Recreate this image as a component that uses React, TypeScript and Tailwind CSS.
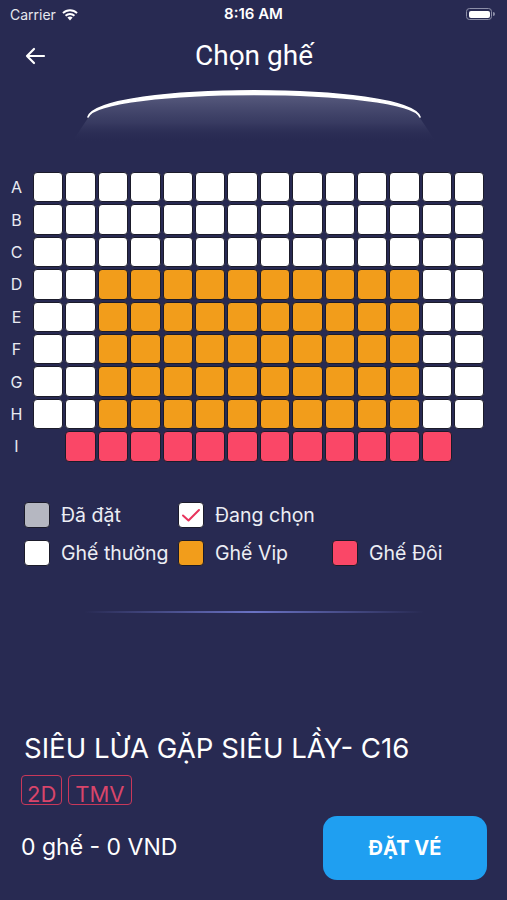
import React from "react";

const ROWS = ["A", "B", "C", "D", "E", "F", "G", "H", "I"];

type Kind = "normal" | "vip" | "couple" | "empty";

function seatKind(r: number, c: number): Kind {
  if (r === 8) return c >= 1 && c <= 12 ? "couple" : "empty";
  if (r >= 3 && c >= 2 && c <= 11) return "vip";
  return "normal";
}

const SEAT_CLS: Record<Kind, string> = {
  normal: "bg-white border border-[#1b1b2a]",
  vip: "bg-[#f29d1b] border border-[#1b1b2a]",
  couple: "bg-[#fa4767] border border-[#1b1b2a]",
  empty: "",
};

function StatusBar() {
  return (
    <div className="relative flex h-[28px] items-center px-[10px] text-white font-['Inter',sans-serif]">
      <div className="flex items-center gap-[5px] text-[14px] text-[#e6e7ee]">
        Carrier
        <svg width="18" height="13" viewBox="0 0 18 13">
          <path d="M9 12.5 L6.4 9.6 A3.8 3.8 0 0 1 11.6 9.6 Z" fill="#fff" />
          <path d="M3.9 7.1 A7.3 7.3 0 0 1 14.1 7.1 L12.8 8.5 A5.4 5.4 0 0 0 5.2 8.5 Z" fill="#fff" />
          <path d="M1.3 4.4 A11 11 0 0 1 16.7 4.4 L15.4 5.8 A9.1 9.1 0 0 0 2.6 5.8 Z" fill="#fff" />
        </svg>
      </div>
      <div className="absolute left-0 right-0 top-0 flex h-[28px] items-center justify-center text-[15px] font-semibold">
        8:16 AM
      </div>
      <div className="ml-auto mr-[2px] flex items-center">
        <div className="flex h-[12px] w-[26px] items-center rounded-[3.5px] border border-[#8d8fa8] p-[1.5px]">
          <div className="h-full w-full rounded-[2px] bg-white" />
        </div>
        <div className="ml-[1px] h-[4px] w-[2px] rounded-r-sm bg-[#8d8fa8]" />
      </div>
    </div>
  );
}

function Screen() {
  return (
    <svg width="507" height="62" viewBox="0 80 507 62" className="block">
      <defs>
        <linearGradient id="glow" x1="0" y1="0" x2="0" y2="1">
          <stop offset="0" stopColor="#5a5d80" stopOpacity="0.95" />
          <stop offset="0.6" stopColor="#3e4167" stopOpacity="0.7" />
          <stop offset="1" stopColor="#282a52" stopOpacity="0" />
        </linearGradient>
      </defs>
      <path
        d="M88 114 C 100 83, 408 83, 420 114 L 436 138 L 72 138 Z"
        fill="url(#glow)"
      />
      <path
        d="M88 113 C 100 78, 408 78, 420 113 C 408 83, 100 83, 88 113 Z"
        fill="#fff"
        stroke="#fff"
        strokeWidth="1.6"
        strokeLinejoin="round"
      />
    </svg>
  );
}

function Legend({ box, label, w }: { box: React.ReactNode; label: string; w: string }) {
  return (
    <div className={`flex items-center gap-[11px] ${w}`}>
      {box}
      <span className="whitespace-nowrap text-[19.5px] leading-[26px] text-[#eceef4]">{label}</span>
    </div>
  );
}

export default function App() {
  return (
    <div className="h-[900px] w-[507px] overflow-hidden bg-[#282a52] font-['Inter',sans-serif] text-white">
      <StatusBar />

      <div className="relative flex h-[56px] items-center justify-center">
        <svg className="absolute left-[24px] top-[19px]" width="22" height="18" viewBox="0 0 22 18">
          <path d="M20 9 H3 M10 2 L3 9 L10 16" fill="none" stroke="#fff" strokeWidth="2.2" strokeLinecap="round" strokeLinejoin="round" />
        </svg>
        <h1 className="pl-[1px] font-['Roboto',sans-serif] text-[28px] text-white">Chọn ghế</h1>
      </div>

      <Screen />

      <div className="mt-[26px] flex flex-col gap-[2px]">
        {ROWS.map((row, r) => (
          <div key={row} className="flex items-center">
            <div className="w-[33px] text-center text-[16px] text-[#e9eaf1]">{row}</div>
            <div className="grid grid-cols-[repeat(14,30.4px)] gap-[2px]">
              {Array.from({ length: 14 }).map((_, c) => {
                const k = seatKind(r, c);
                return (
                  <div
                    key={c}
                    className={`h-[30.4px] w-[30.4px] rounded-[4px] ${SEAT_CLS[k]}`}
                  />
                );
              })}
            </div>
          </div>
        ))}
      </div>

      <div className="ml-[24px] mt-[40px] flex flex-col gap-[12px]">
        <div className="flex items-center">
          <Legend
            w="w-[154px]"
            label="Đã đặt"
            box={<div className="h-[26px] w-[26px] rounded-[4px] border border-[#1b1b2a] bg-[#b5b7c1]" />}
          />
          <Legend
            w="w-[154px]"
            label="Đang chọn"
            box={
              <div className="flex h-[26px] w-[26px] items-center justify-center rounded-[4px] border border-[#1b1b2a] bg-white">
                <svg width="20" height="16" viewBox="0 0 20 16">
                  <path d="M2 8.5 L7.5 13.5 L18 3" fill="none" stroke="#e8335c" strokeWidth="2" strokeLinecap="round" strokeLinejoin="round" />
                </svg>
              </div>
            }
          />
        </div>
        <div className="flex items-center">
          <Legend
            w="w-[154px]"
            label="Ghế thường"
            box={<div className="h-[26px] w-[26px] rounded-[4px] border border-[#1b1b2a] bg-white" />}
          />
          <Legend
            w="w-[154px]"
            label="Ghế Vip"
            box={<div className="h-[26px] w-[26px] rounded-[4px] border border-[#1b1b2a] bg-[#f29d1b]" />}
          />
          <Legend
            w="w-[154px]"
            label="Ghế Đôi"
            box={<div className="h-[26px] w-[26px] rounded-[4px] border border-[#1b1b2a] bg-[#fa4767]" />}
          />
        </div>
      </div>

      <div className="mx-auto mt-[45px] h-[2px] w-[340px] bg-gradient-to-r from-transparent via-[#6a72c4] to-transparent" />

      <div className="ml-[24px] mt-[119px] text-[27.6px] leading-[32px] text-white">
        SIÊU LỪA GẶP SIÊU LẦY- C16
      </div>

      <div className="ml-[21px] mt-[11px] flex gap-[6px]">
        <div className="h-[30px] overflow-hidden rounded-[4px] border-[1.5px] border-[#c9385a] px-[5px] pt-[7px] text-[22px] leading-none text-[#d9456a]">
          2D
        </div>
        <div className="h-[30px] overflow-hidden rounded-[4px] border-[1.5px] border-[#c9385a] px-[6px] pt-[7px] text-[22px] leading-none text-[#d9456a]">
          TMV
        </div>
      </div>

      <div className="mt-[11px] flex items-center justify-between pl-[21px] pr-[20px]">
        <div className="text-[23px] text-white">0 ghế - 0 VND</div>
        <button className="flex h-[64px] w-[164px] items-center justify-center rounded-[14px] bg-[#1f9ff1] text-[20px] font-bold text-white">
          ĐẶT VÉ
        </button>
      </div>
    </div>
  );
}
